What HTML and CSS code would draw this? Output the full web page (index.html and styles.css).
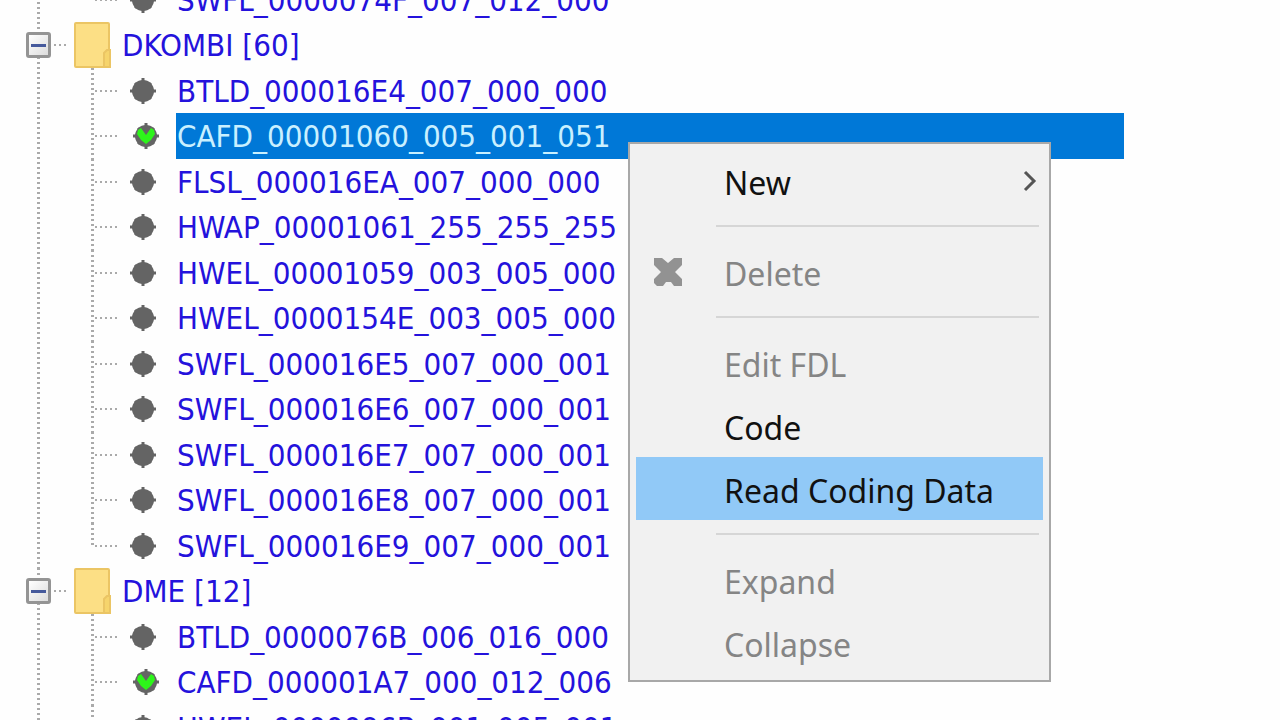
FILE: index.html
```html
<!DOCTYPE html>
<html lang="en">
	<head>
		<meta charset="utf-8">
		<title>ECU Tree</title>
		<link rel="stylesheet" href="styles.css">
	</head>
	<body>
		<!-- Shared icons -->
		<svg class="defs" width="0" height="0" aria-hidden="true">
			<symbol id="folder" viewBox="0 0 38 46">
				<path d="M2 1H34Q35 1 35 2V26L37 29V45H2Q1 45 1 44V2Q1 1 2 1Z" fill="#fcdf85"/>
				<path d="M30 44V31L32 28H36V44Z" fill="#f6d46c"/>
				<path d="M35 27V2Q35 1 34 1H2Q1 1 1 2V44Q1 45 2 45H36V28H33L30 31V44" fill="none" stroke="#ebc564" stroke-width="2"/>
			</symbol>
			<symbol id="chip" viewBox="0 0 26 26">
				<path d="M13 0V26M0 13H26M5 5L21 21M21 5L5 21" stroke="#646464" stroke-width="3"/>
				<circle cx="13" cy="13" r="11" fill="#646464"/>
			</symbol>
			<symbol id="chip-ok" viewBox="0 0 26 26">
				<path d="M13 0V26M0 13H26M5 5L21 21M21 5L5 21" stroke="#646464" stroke-width="3"/>
				<circle cx="13" cy="13" r="11" fill="#646464"/>
				<path d="M5 7L8 5L13 12L18 5L21 7L22 11L18 17L13 21L8 17L4 11Z" fill="#2df51a"/>
			</symbol>
		</svg>

		<ul class="tree">
			<li class="group">
				<ul class="children">
					<li class="item"><svg class="chip"><use href="#chip"/></svg><span class="label">SWFL_0000074F_007_012_000</span></li>
				</ul>
			</li>
			<li class="group">
				<div class="head">
					<button class="toggle" type="button" aria-label="Collapse DKOMBI"></button>
					<svg class="folder"><use href="#folder"/></svg>
					<span>DKOMBI [60]</span>
				</div>
				<ul class="children">
					<li class="item"><svg class="chip"><use href="#chip"/></svg><span class="label">BTLD_000016E4_007_000_000</span></li>
					<li class="item ok selected"><svg class="chip"><use href="#chip-ok"/></svg><span class="label">CAFD_00001060_005_001_051</span></li>
					<li class="item"><svg class="chip"><use href="#chip"/></svg><span class="label">FLSL_000016EA_007_000_000</span></li>
					<li class="item"><svg class="chip"><use href="#chip"/></svg><span class="label">HWAP_00001061_255_255_255</span></li>
					<li class="item"><svg class="chip"><use href="#chip"/></svg><span class="label">HWEL_00001059_003_005_000</span></li>
					<li class="item"><svg class="chip"><use href="#chip"/></svg><span class="label">HWEL_0000154E_003_005_000</span></li>
					<li class="item"><svg class="chip"><use href="#chip"/></svg><span class="label">SWFL_000016E5_007_000_001</span></li>
					<li class="item"><svg class="chip"><use href="#chip"/></svg><span class="label">SWFL_000016E6_007_000_001</span></li>
					<li class="item"><svg class="chip"><use href="#chip"/></svg><span class="label">SWFL_000016E7_007_000_001</span></li>
					<li class="item"><svg class="chip"><use href="#chip"/></svg><span class="label">SWFL_000016E8_007_000_001</span></li>
					<li class="item"><svg class="chip"><use href="#chip"/></svg><span class="label">SWFL_000016E9_007_000_001</span></li>
				</ul>
			</li>
			<li class="group">
				<div class="head">
					<button class="toggle" type="button" aria-label="Collapse DME"></button>
					<svg class="folder"><use href="#folder"/></svg>
					<span>DME [12]</span>
				</div>
				<ul class="children open-end">
					<li class="item"><svg class="chip"><use href="#chip"/></svg><span class="label">BTLD_0000076B_006_016_000</span></li>
					<li class="item ok"><svg class="chip"><use href="#chip-ok"/></svg><span class="label">CAFD_000001A7_000_012_006</span></li>
					<li class="item"><svg class="chip"><use href="#chip"/></svg><span class="label">HWEL_0000096B_001_005_001</span></li>
				</ul>
			</li>
		</ul>

		<!-- Context menu -->
		<div class="menu" role="menu">
			<button type="button" role="menuitem">
				<span>New</span>
				<svg class="arrow" viewBox="0 0 14 22"><path d="M2 2L11 11L2 20" fill="none" stroke="#555" stroke-width="3"/></svg>
			</button>
			<hr>
			<button type="button" role="menuitem" disabled>
				<svg class="cross" viewBox="0 0 30 30"><path d="M1 1H9L15 6L21 1H29V8L22 15L29 22V29H21L18 25H13L10 29H4L1 26V22L8 15L1 8Z" fill="#929292"/></svg>
				<span>Delete</span>
			</button>
			<hr>
			<button type="button" role="menuitem" disabled><span>Edit FDL</span></button>
			<button type="button" role="menuitem"><span>Code</span></button>
			<button class="active" type="button" role="menuitem"><span>Read Coding Data</span></button>
			<hr>
			<button type="button" role="menuitem" disabled><span>Expand</span></button>
			<button type="button" role="menuitem" disabled><span>Collapse</span></button>
		</div>
	</body>
</html>
```

FILE: styles.css
```css
* {
	box-sizing: border-box;
}

body {
	position: relative;
	height: 100vh;
	margin: 0;
	overflow: hidden;
	background-color: #fefefe;
	color: #2412dc;
	font-family: "DejaVu Sans Condensed", "DejaVu Sans", sans-serif;
	font-stretch: condensed;
	font-size: 31px;
}

.defs {
	display: block;
}

.tree,
.children {
	margin: 0;
	padding: 0;
	list-style: none;
}

.tree {
	margin-top: -23px;
}

/* Dotted trunk that links the groups */
.group {
	padding-left: 26px;
	background: repeating-linear-gradient(#aaa 0 2px, transparent 2px 5px) 37px 0 / 3px 100% no-repeat;
}

.head {
	display: flex;
	align-items: center;
	height: 46px;
	white-space: nowrap;
}

.head::before {
	order: 1;
	width: 15px;
	height: 2px;
	margin: 0 5px 0 3px;
	background: repeating-linear-gradient(90deg, #aaa 0 2px, transparent 2px 5px);
	content: "";
}

.toggle {
	display: flex;
	align-items: center;
	justify-content: center;
	width: 25px;
	height: 26px;
	padding: 0;
	border: 3px solid #949494;
	border-radius: 3px;
	background: linear-gradient(135deg, #fff, #dcdcdc);
}

.toggle::before {
	width: 15px;
	height: 3px;
	background-color: #465a9c;
	content: "";
}

.folder {
	order: 2;
	width: 38px;
	height: 46px;
}

.head span {
	order: 3;
	margin-left: 10px;
}

/* Rows */
.item {
	display: flex;
	align-items: center;
	height: 45px;
	padding-left: 65px;
	white-space: nowrap;
	background:
		repeating-linear-gradient(#aaa 0 2px, transparent 2px 5px) 65px 0 / 3px 100% no-repeat;
}

.item:nth-child(even) {
	height: 46px;
}

.item:last-child {
	background-size: 3px 50%;
}

.open-end .item:last-child {
	background-size: 3px 100%;
}

.item::before {
	width: 25px;
	height: 2px;
	margin-left: 4px;
	background: repeating-linear-gradient(90deg, #aaa 0 2px, transparent 2px 5px);
	content: "";
}

.chip {
	width: 26px;
	height: 26px;
	margin: 0 20px 0 10px;
}

.ok .chip {
	margin: 0 17px 0 13px;
}

.label {
	flex: 1;
	align-self: stretch;
	margin-right: 156px;
	padding-left: 1px;
	line-height: 46px;
}

.selected .label {
	background-color: #0078d7;
	color: #c9f0ff;
}

/* Context menu */
.menu {
	position: absolute;
	top: 142px;
	left: 628px;
	width: 423px;
	padding: 5px 6px 6px;
	border: 2px solid #a8a8a8;
	background-color: #f1f1f1;
	font-family: "Noto Sans", sans-serif;
	font-stretch: normal;
}

.menu button {
	display: grid;
	grid-template-columns: 88px 1fr 20px;
	align-items: center;
	width: 100%;
	height: 63px;
	padding: 0;
	border: 0;
	background: none;
	color: #111;
	font-family: inherit;
	font-size: 32px;
	text-align: left;
}

.menu button:disabled {
	color: #858585;
}

.menu button.active {
	background-color: #91c9f7;
}

.menu span {
	grid-column: 2;
	padding-top: 4px;
	white-space: nowrap;
}

.menu hr {
	height: 2px;
	margin: 13px 4px 13px 80px;
	border: 0;
	background-color: #d6d6d6;
}

.cross {
	width: 30px;
	height: 30px;
	margin-left: 17px;
}

.arrow {
	width: 14px;
	height: 22px;
}
```
